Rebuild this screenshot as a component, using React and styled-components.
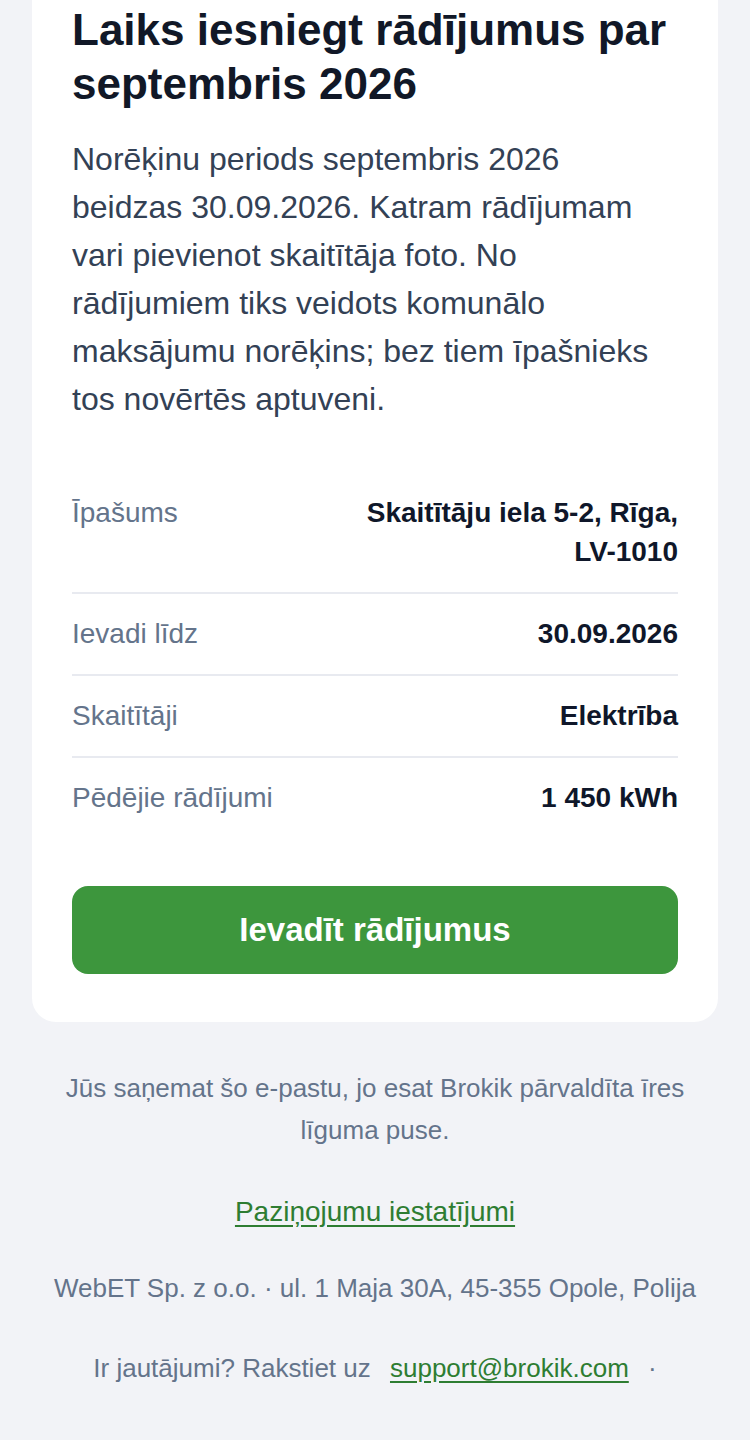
import React from "react";
import styled, { createGlobalStyle } from "styled-components";

const Global = createGlobalStyle`
  html, body { margin: 0; padding: 0; background: #f2f3f7; }
  body { font-family: "Liberation Sans", Arial, Helvetica, sans-serif; -webkit-font-smoothing: antialiased; }
  * { box-sizing: border-box; }
`;

const Page = styled.div`
  width: 750px;
  padding: 0 32px 40px;
  margin-top: -37px;
`;

const Card = styled.div`
  background: #ffffff;
  border-radius: 24px;
  padding: 40px 40px 48px;
`;

const Title = styled.h1`
  margin: 0;
  font-size: 44px;
  line-height: 54px;
  font-weight: 700;
  color: #111827;
`;

const Lead = styled.p`
  margin: 24px 0 0;
  font-size: 32px;
  line-height: 48px;
  color: #334155;
`;

const Details = styled.div`
  margin-top: 50px;
  display: flex;
  flex-direction: column;
`;

const Row = styled.div`
  display: flex;
  justify-content: space-between;
  align-items: flex-start;
  gap: 24px;
  padding: 20px 0 21px;
  border-top: ${(p) => (p.$first ? "none" : "2px solid #e8eaf0")};
  font-size: 28px;
  line-height: 39px;
`;

const Label = styled.span`
  color: #64748b;
  flex: 0 0 auto;
`;

const Value = styled.span`
  color: #0f172a;
  font-weight: 700;
  text-align: right;
  max-width: 340px;
`;

const Button = styled.a`
  display: block;
  margin-top: 48px;
  background: #3d963d;
  color: #ffffff;
  border-radius: 16px;
  text-align: center;
  text-decoration: none;
  font-size: 33px;
  font-weight: 700;
  line-height: 40px;
  padding: 24px;
`;

const Footer = styled.div`
  padding: 45px 8px 0;
  display: flex;
  flex-direction: column;
  gap: 38px;
  text-align: center;
  color: #64748b;
  font-size: 26px;
  line-height: 42px;
`;

const FooterText = styled.p`
  margin: 0;
  font-size: ${(p) => (p.$large ? "28px" : "inherit")};
  line-height: ${(p) => (p.$large ? "34px" : "inherit")};
  padding-top: ${(p) => (p.$large ? "6px" : "0")};
`;

const FooterLink = styled.a`
  color: #2e7d32;
  text-decoration: underline;
  text-underline-offset: 4px;
  margin: ${(p) => (p.$spaced ? "0 12px" : "0")};
`;

const rows = [
  { label: "Īpašums", value: "Skaitītāju iela 5-2, Rīga, LV-1010" },
  { label: "Ievadi līdz", value: "30.09.2026" },
  { label: "Skaitītāji", value: "Elektrība" },
  { label: "Pēdējie rādījumi", value: "1 450 kWh" },
];

export default function App() {
  return (
    <>
      <Global />
      <Page>
        <Card>
          <Title>Laiks iesniegt rādījumus par septembris 2026</Title>
          <Lead>
            Norēķinu periods septembris 2026 beidzas 30.09.2026. Katram rādījumam vari pievienot
            skaitītāja foto. No rādījumiem tiks veidots komunālo maksājumu norēķins; bez tiem
            īpašnieks tos novērtēs aptuveni.
          </Lead>
          <Details>
            {rows.map((r, i) => (
              <Row key={r.label} $first={i === 0}>
                <Label>{r.label}</Label>
                <Value>{r.value}</Value>
              </Row>
            ))}
          </Details>
          <Button href="#">Ievadīt rādījumus</Button>
        </Card>
        <Footer>
          <FooterText>Jūs saņemat šo e-pastu, jo esat Brokik pārvaldīta īres līguma puse.</FooterText>
          <FooterText $large>
            <FooterLink href="#">Paziņojumu iestatījumi</FooterLink>
          </FooterText>
          <FooterText>WebET Sp. z o.o. · ul. 1 Maja 30A, 45-355 Opole, Polija</FooterText>
          <FooterText>
            Ir jautājumi? Rakstiet uz <FooterLink href="#" $spaced>support@brokik.com</FooterLink> ·
          </FooterText>
        </Footer>
      </Page>
    </>
  );
}
